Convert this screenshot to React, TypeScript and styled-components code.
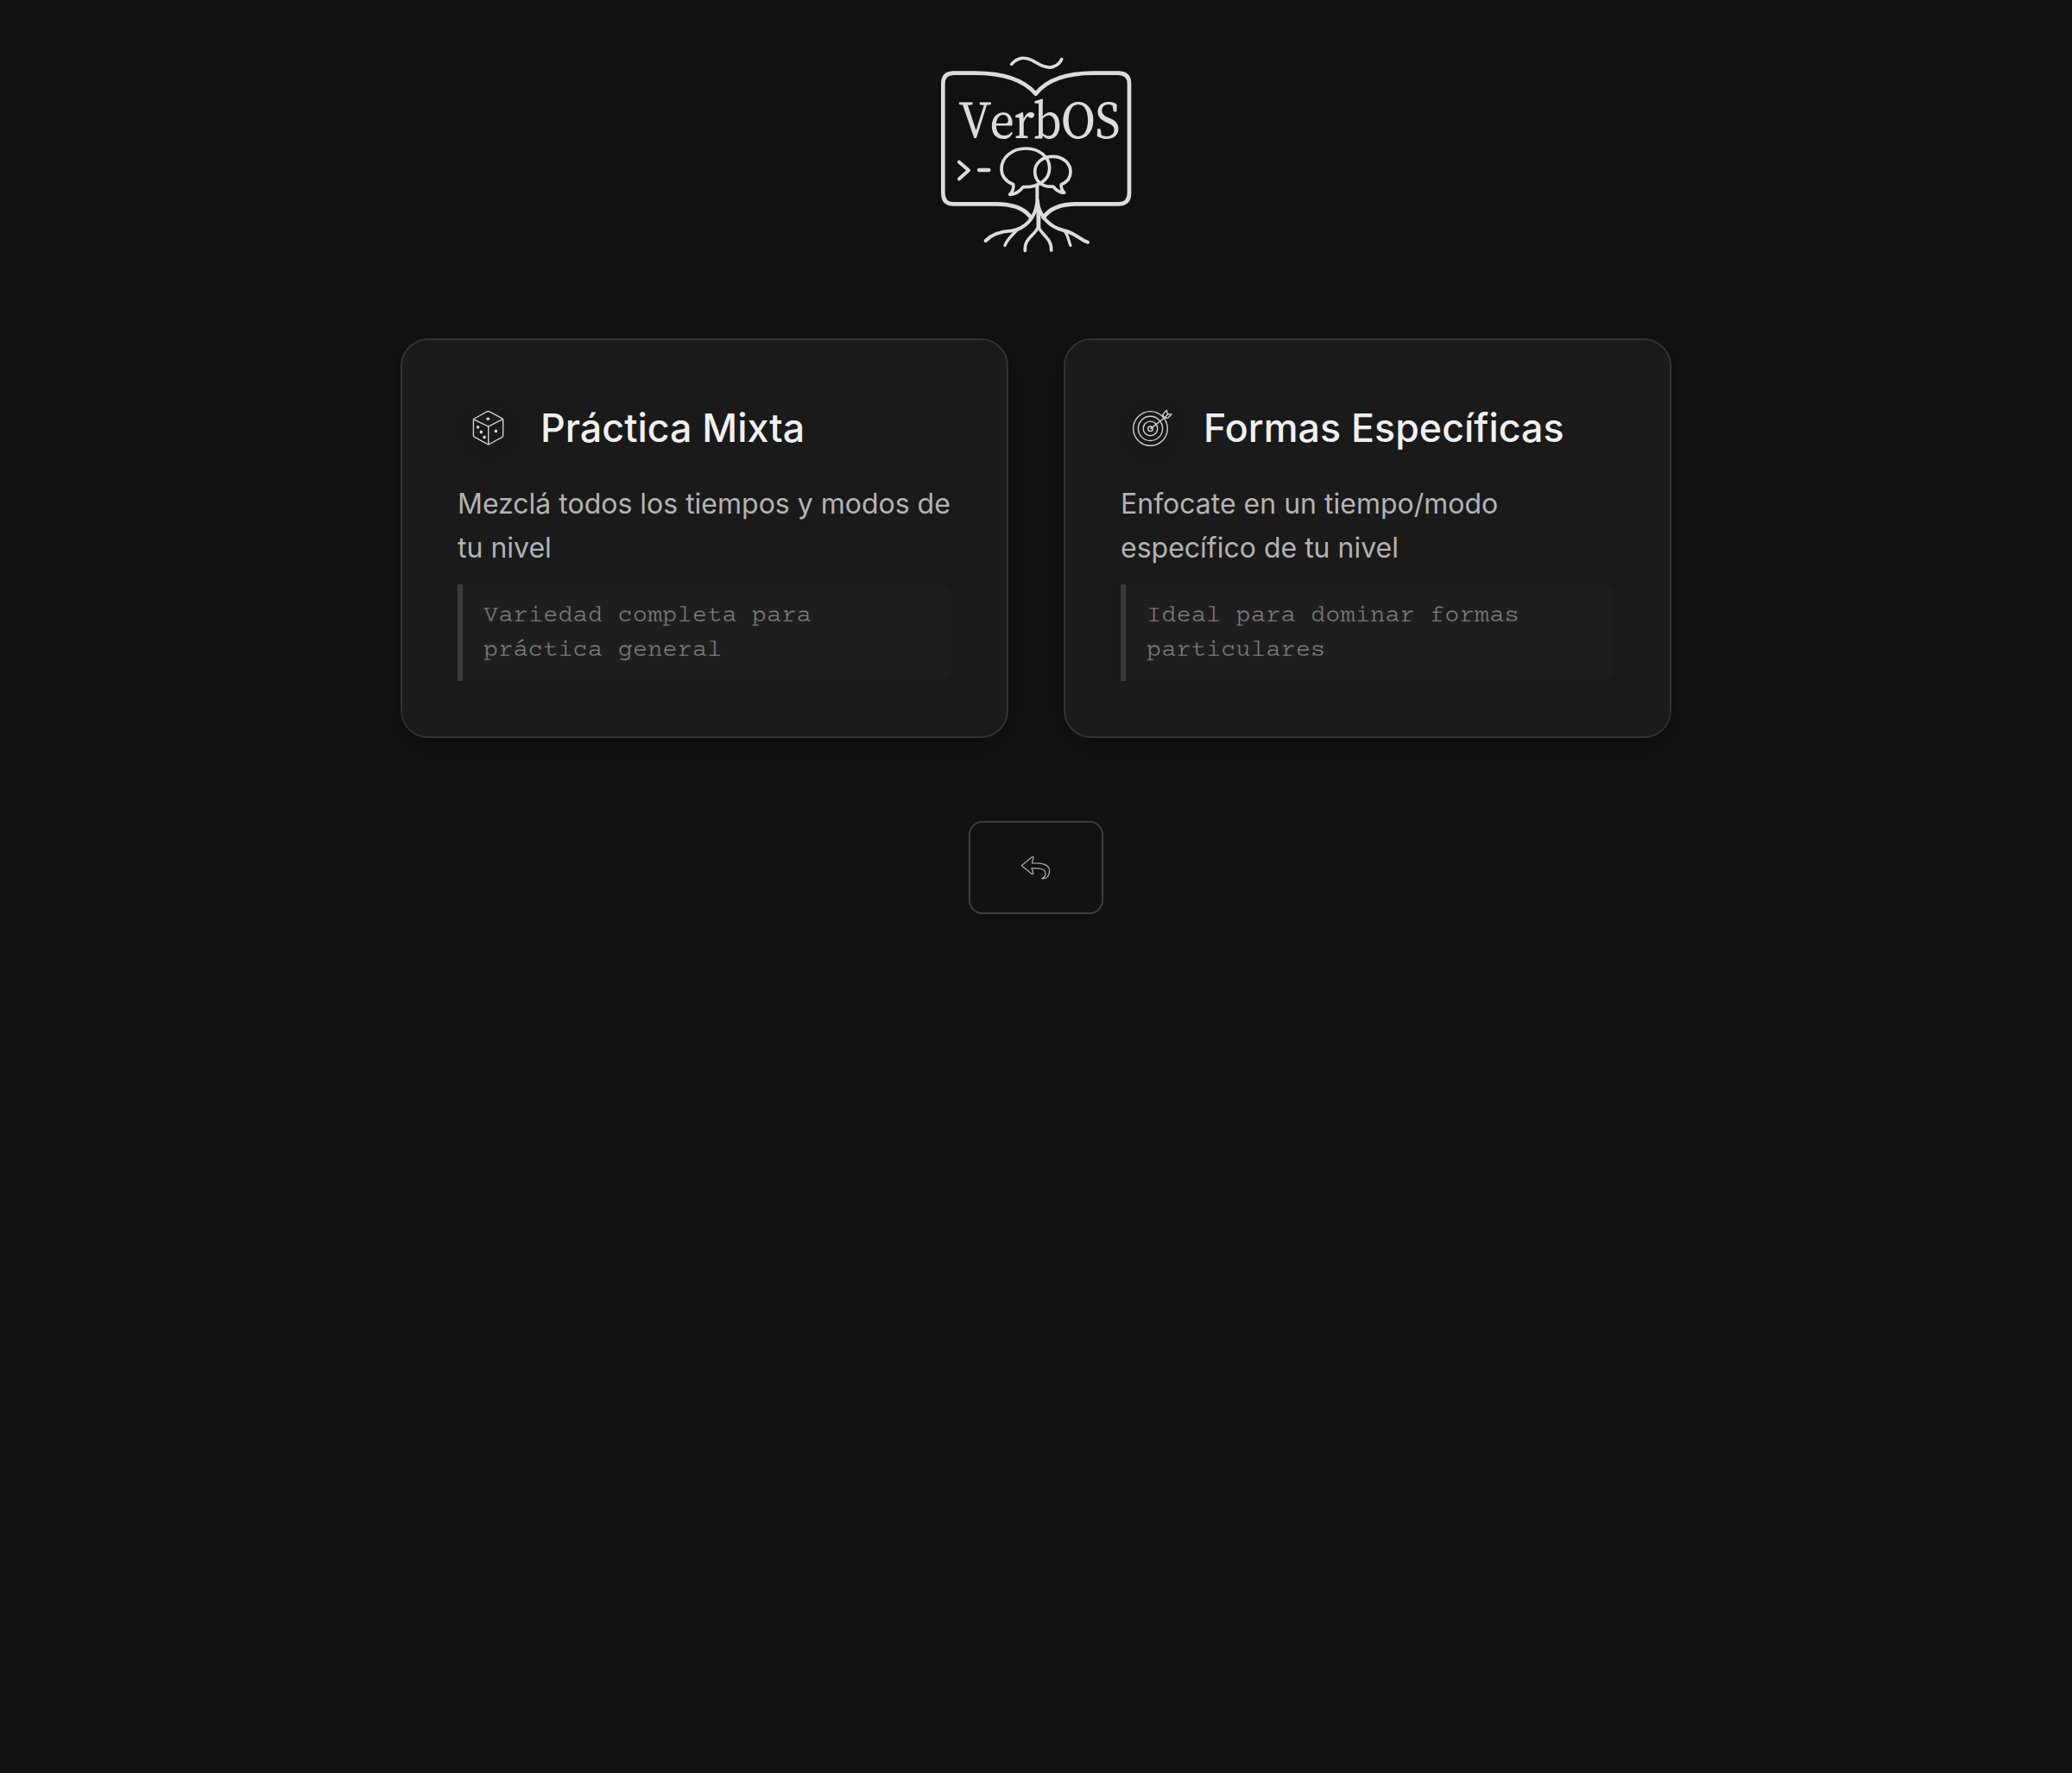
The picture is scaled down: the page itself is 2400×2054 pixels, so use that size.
import React from "react";
import styled, { createGlobalStyle } from "styled-components";

const GlobalStyle = createGlobalStyle`
  *, *::before, *::after { box-sizing: border-box; }
  html, body { margin: 0; padding: 0; background: #121212; }
  body {
    font-family: Inter, "Liberation Sans", sans-serif;
    color: #f0f0f0;
    line-height: 1.7;
    -webkit-font-smoothing: antialiased;
  }
`;

const Page = styled.main`
  display: flex;
  flex-direction: column;
  align-items: center;
  min-height: 2054px;
  padding-top: 50px;
  background: #121212;
`;

const Logo = styled.svg`
  display: block;
  width: 260px;
  height: 260px;
  margin-bottom: 82px;
  filter: drop-shadow(0 8px 16px rgba(0, 0, 0, 0.18));
`;

const LogoText = styled.text`
  font-family: "Source Serif 4", "Liberation Serif", serif;
  font-size: 184px;
  fill: #dddcda;
`;

const Options = styled.section`
  display: grid;
  grid-template-columns: repeat(2, 704px);
  gap: 64px;
`;

const Card = styled.article`
  padding: 64px;
  border: 2px solid #333;
  border-radius: 32px;
  background: #1a1a1a;
  box-shadow: 0 8px 24px rgba(0, 0, 0, 0.3);
`;

const CardHeader = styled.h2`
  display: flex;
  align-items: center;
  gap: 24px;
  margin: 0 0 24px;
  font-size: 44.8px;
  font-weight: 500;
  line-height: 1.7;
  color: #f0f0f0;
`;

const CardIcon = styled.svg`
  display: block;
  flex: none;
  width: 72px;
  height: 72px;
  fill: none;
  stroke: #cfcfcf;
  stroke-width: 1.4px;
  stroke-linejoin: round;
  stroke-linecap: round;
  filter: drop-shadow(0 4px 8px rgba(0, 0, 0, 0.2));
`;

const Description = styled.p`
  margin: 0 0 16px;
  font-size: 32px;
  line-height: 1.6;
  color: #b3b3b3;
`;

const Note = styled.p`
  margin: 0;
  padding: 17.5px 24px 14.5px;
  border-left: 6px solid #3a3a3a;
  border-radius: 0 12px 12px 0;
  background: #1e1e1e;
  font-family: "Courier Prime", "Liberation Mono", monospace;
  font-size: 28.8px;
  line-height: 1.4;
  color: #848484;
  -webkit-text-stroke: 0.55px #1e1e1e;
`;

const BackButton = styled.button`
  display: flex;
  align-items: center;
  justify-content: center;
  width: 156px;
  height: 108px;
  margin-top: 96px;
  padding: 0;
  border: 2px solid #404040;
  border-radius: 16px;
  background: transparent;
`;

const BackIcon = styled.svg`
  display: block;
  width: 60px;
  height: 50px;
  fill: none;
  stroke: #a8a8a8;
  stroke-width: 1.3px;
  stroke-linejoin: round;
`;

const VerbosLogo = () => (
  <Logo viewBox="0 0 780 780" role="img" aria-label="VerbOS">
    <g fill="none" stroke="#dddcda" strokeLinecap="round" strokeLinejoin="round">
      <path strokeWidth="11" d="M305 73C324 51 350 45 377 60C405 76 428 90 450 82C466 76 475 67 479 56" />
      <path
        strokeWidth="14"
        d="M369 602C345 570 300 559 250 559H104Q67 559 67 522V141Q67 104 104 104H178C265 104 345 125 389 176C430 125 500 104 590 104H676Q714 104 714 141V522Q714 559 676 559H530C480 559 440 570 416 606"
      />
      <path strokeWidth="12" d="M123 413L156 442L123 472" />
      <path strokeWidth="13" d="M192 441H226" />
      <path
        strokeWidth="11"
        d="M311 491C285 480 270 460 270 437C270 397 307 366 355 366C402 366 437 397 437 434C437 473 402 502 345 500C333 516 318 526 299 526C309 516 313 503 311 491Z"
      />
      <path
        strokeWidth="11"
        d="M478 491C500 482 510 467 510 447C510 418 485 394 449 394C412 394 386 416 386 447C386 480 413 502 449 498C461 512 475 520 488 520C480 511 476 501 478 491Z"
      />
      <path strokeWidth="12" d="M394 492V552C389 608 350 645 307 652C270 654 237 664 215 687" />
      <path strokeWidth="10" d="M327 646C314 662 291 678 282 703" />
      <path strokeWidth="12" d="M395 545C399 601 437 639 487 651C522 658 546 684 570 692" />
      <path strokeWidth="10" d="M489 653C502 665 502 687 510 703" />
      <path strokeWidth="11" d="M397 560V640C386 668 348 678 352 721" />
      <path strokeWidth="11" d="M399 640C412 668 446 681 443 720" />
      <path strokeWidth="8" d="M402 585V640" />
    </g>
    <LogoText transform="scale(0.93 1)" x="129 246 336 410 512 640" y="331">
      VerbOS
    </LogoText>
  </Logo>
);

const DiceIcon = () => (
  <CardIcon viewBox="0 0 72 72" aria-hidden="true">
    <path d="M34.3 16.7Q35.5 16.2 36.7 16.7L51.8 24.9Q52.7 25.5 52.7 26.7V44.6Q52.7 45.8 51.7 46.4L36.8 54.5Q35.6 55 34.4 54.4L19.3 46.1Q18.4 45.5 18.4 44.4V26.8Q18.4 25.6 19.4 25Z" />
    <path d="M18.8 25.8L35.7 34.2L52.3 25.6M35.7 34.2V54.5" />
    <g fill="#dadada" stroke="none">
      <ellipse cx="35.2" cy="25.2" rx="2" ry="1.6" />
      <ellipse cx="23.6" cy="34.8" rx="1.7" ry="1.9" />
      <ellipse cx="27.3" cy="40.5" rx="1.7" ry="1.9" />
      <ellipse cx="31" cy="46.4" rx="1.7" ry="1.9" />
      <ellipse cx="44.4" cy="39.4" rx="1.7" ry="1.9" />
    </g>
  </CardIcon>
);

const TargetIcon = () => (
  <CardIcon viewBox="0 0 72 72" aria-hidden="true">
    <circle cx="34.5" cy="36.4" r="19.8" />
    <circle cx="34.5" cy="36.4" r="14.1" />
    <circle cx="34.5" cy="36.4" r="8.3" />
    <circle cx="34.5" cy="36.8" r="2.8" />
    <path d="M34.8 36.6L50.8 24L55.5 19.6M50.8 24L48.6 20.4L53.3 15.2L54.4 19.6L59 19.9L54.4 24.4Z" />
  </CardIcon>
);

const options = [
  {
    icon: <DiceIcon />,
    title: "Práctica Mixta",
    description: "Mezclá todos los tiempos y modos de tu nivel",
    note: "Variedad completa para práctica general",
  },
  {
    icon: <TargetIcon />,
    title: "Formas Específicas",
    description: "Enfocate en un tiempo/modo específico de tu nivel",
    note: "Ideal para dominar formas particulares",
  },
];

export default function App() {
  return (
    <>
      <GlobalStyle />
      <Page>
        <VerbosLogo />
        <Options>
          {options.map((o) => (
            <Card key={o.title}>
              <CardHeader>
                {o.icon}
                {o.title}
              </CardHeader>
              <Description>{o.description}</Description>
              <Note>{o.note}</Note>
            </Card>
          ))}
        </Options>
        <BackButton type="button" aria-label="Volver">
          <BackIcon viewBox="0 0 60 50" aria-hidden="true">
            <path d="M13.3 22.8L25.5 12.8Q27.4 12 27 14L25.4 19.9C35 19.9 45.6 20 45.6 29C45.6 35.5 41.5 38.6 36.5 37.6C41.5 36.5 41.8 31.5 39.7 28.5C37.5 25.8 32 25.6 25 25.9L26.8 31.2Q26.9 33 25.2 32.4Z" />
          </BackIcon>
        </BackButton>
      </Page>
    </>
  );
}
